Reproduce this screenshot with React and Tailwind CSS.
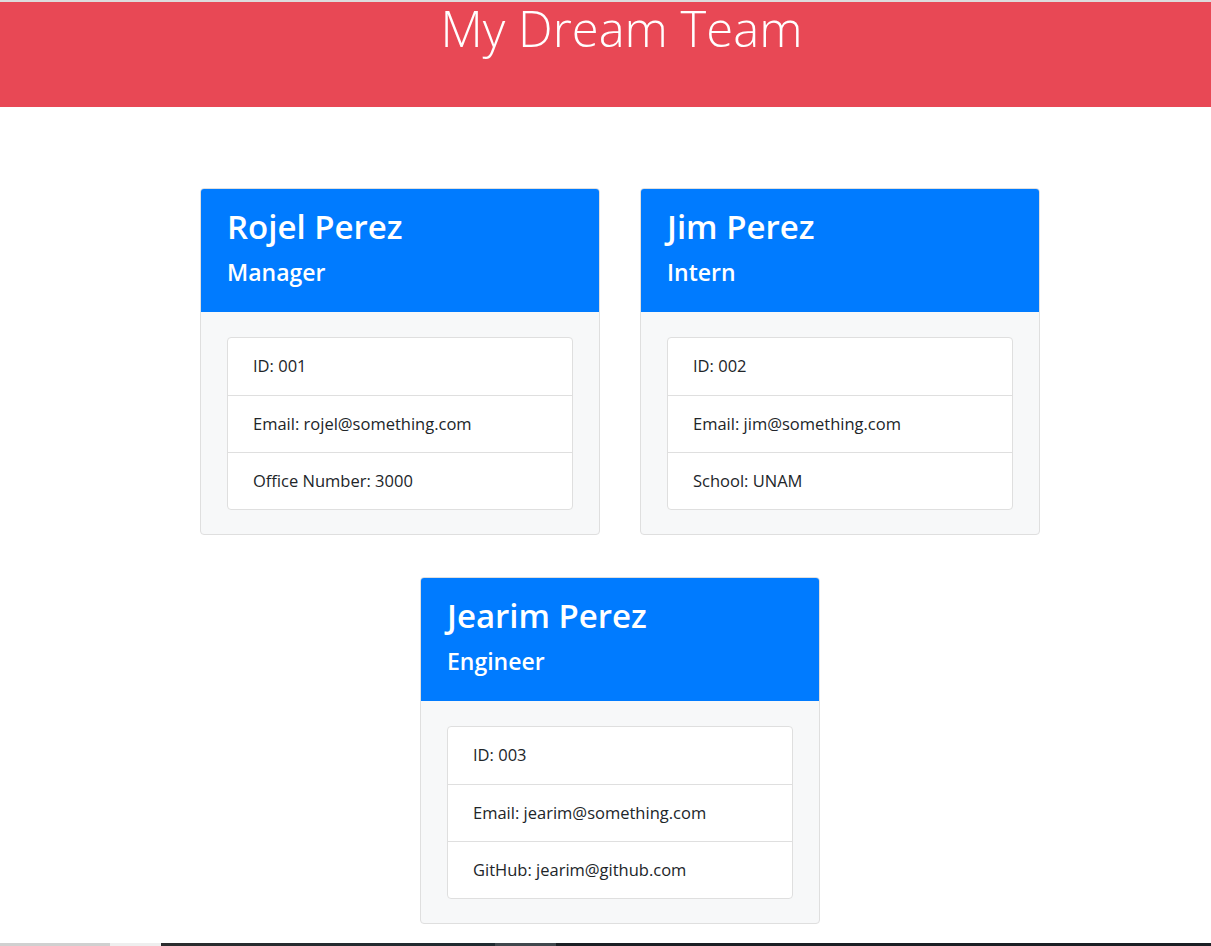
import React from "react";

const team = [
  {
    name: "Rojel Perez",
    role: "Manager",
    items: ["ID: 001", "Email: rojel@something.com", "Office Number: 3000"],
  },
  {
    name: "Jim Perez",
    role: "Intern",
    items: ["ID: 002", "Email: jim@something.com", "School: UNAM"],
  },
  {
    name: "Jearim Perez",
    role: "Engineer",
    items: ["ID: 003", "Email: jearim@something.com", "GitHub: jearim@github.com"],
  },
];

const Card = ({ member }) => (
  <div className="w-[400px] h-[347px] flex flex-col border border-[#dfdfdf] rounded-[4px] bg-[#f7f8f9] overflow-hidden">
    <div className="h-[123px] bg-[#007bff] text-white px-[26px] pt-[14px] shrink-0">
      <h2 className="text-[33px] font-semibold leading-[48px]">{member.name}</h2>
      <h4 className="text-[23px] font-semibold leading-[36px] mt-[3px]">{member.role}</h4>
    </div>
    <div className="p-[26px] pt-[25px]">
      <ul className="bg-white border border-[#dfdfdf] rounded-[4px]">
        {member.items.map((item, i) => (
          <li
            key={i}
            className={
              "h-[57px] flex items-center px-[25px] text-[16.5px] text-[#212529] " +
              (i > 0 ? "border-t border-[#dfdfdf]" : "")
            }
          >
            {item}
          </li>
        ))}
      </ul>
    </div>
  </div>
);

export default function App() {
  return (
    <div className="w-full min-h-[946px] bg-white flex flex-col" style={{ fontFamily: '"Open Sans", "Noto Sans", sans-serif' }}>
      <div className="h-[2px] bg-[#dcdcdc]" />
      <header className="h-[105px] bg-[#e84855] text-white pl-[32px] flex justify-center">
        <h1 className="text-[49px] font-light leading-[52px]">My Dream Team</h1>
      </header>

      <main className="pl-[29px] pt-[81px] flex flex-wrap justify-center gap-x-[40px] gap-y-[42px] max-w-[1211px]">
        <Card member={team[0]} />
        <Card member={team[1]} />
        <div className="w-full flex justify-center">
          <Card member={team[2]} />
        </div>
      </main>

      <div className="mt-auto h-[3px] flex">
        <div className="w-[110px] bg-[#d0d0d0]" />
        <div className="w-[51px] bg-[#eeeeee]" />
        <div className="w-[334px] bg-gradient-to-r from-[#2b2c2e] to-[#1f2a30]" />
        <div className="w-[61px] bg-[#40474d]" />
        <div className="flex-1 bg-[#1b1f24]" />
      </div>
    </div>
  );
}
